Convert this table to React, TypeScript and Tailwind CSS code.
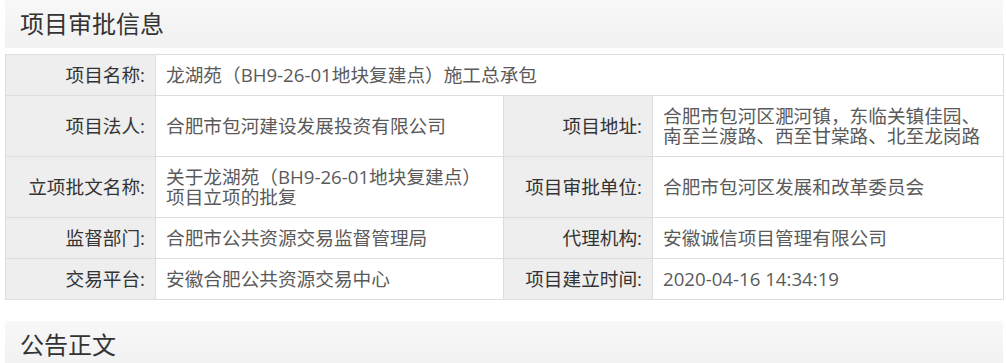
const rows: { label: string; value: string[]; label2?: string; value2?: string[] }[] = [
  { label: '项目名称:', value: ['龙湖苑（BH9-26-01地块复建点）施工总承包'] },
  {
    label: '项目法人:',
    value: ['合肥市包河建设发展投资有限公司'],
    label2: '项目地址:',
    value2: ['合肥市包河区淝河镇，东临关镇佳园、', '南至兰渡路、西至甘棠路、北至龙岗路'],
  },
  {
    label: '立项批文名称:',
    value: ['关于龙湖苑（BH9-26-01地块复建点）', '项目立项的批复'],
    label2: '项目审批单位:',
    value2: ['合肥市包河区发展和改革委员会'],
  },
  {
    label: '监督部门:',
    value: ['合肥市公共资源交易监督管理局'],
    label2: '代理机构:',
    value2: ['安徽诚信项目管理有限公司'],
  },
  {
    label: '交易平台:',
    value: ['安徽合肥公共资源交易中心'],
    label2: '项目建立时间:',
    value2: ['2020-04-16 14:34:19'],
  },
];

function SectionTitle({ title }: { title: string }) {
  return (
    <div className="ml-[5px] w-[998px] h-[48px] bg-gradient-to-b from-[#f8f8f8] to-[#f1f1f1] flex items-center pl-[15px]">
      <h2 className="text-[24px] leading-[30px] text-[#333] font-normal">{title}</h2>
    </div>
  );
}

const labelCls =
  'border border-[#dddddd] bg-[#eeeeee] text-right text-[#333] px-[10px] py-[10px] align-middle whitespace-nowrap';
const valueCls =
  'border border-[#dddddd] bg-white text-left text-[#5a5a5a] px-[10px] py-[10px] align-middle whitespace-nowrap';

export default function App() {
  return (
    <div
      className="bg-white w-[1006px] h-[363px] overflow-hidden text-[18.67px] leading-[20px]"
      style={{ fontFamily: '"Open Sans", "Microsoft YaHei", "Noto Sans CJK SC", sans-serif' }}
    >
      <SectionTitle title="项目审批信息" />

      <table className="ml-[5px] mt-[6px] w-[998px] table-fixed border-collapse">
        <colgroup>
          <col className="w-[150px]" />
          <col className="w-[348px]" />
          <col className="w-[149px]" />
          <col className="w-[351px]" />
        </colgroup>
        <tbody>
          {rows.map((r) => (
            <tr key={r.label}>
              <td className={labelCls}>{r.label}</td>
              {r.label2 ? (
                <>
                  <td className={valueCls}>
                    {r.value.map((l) => (
                      <div key={l}>{l}</div>
                    ))}
                  </td>
                  <td className={labelCls}>{r.label2}</td>
                  <td className={valueCls}>
                    {r.value2!.map((l) => (
                      <div key={l}>{l}</div>
                    ))}
                  </td>
                </>
              ) : (
                <td className={valueCls} colSpan={3}>
                  {r.value[0]}
                </td>
              )}
            </tr>
          ))}
        </tbody>
      </table>

      <div className="mt-[21px]">
        <SectionTitle title="公告正文" />
      </div>
    </div>
  );
}
